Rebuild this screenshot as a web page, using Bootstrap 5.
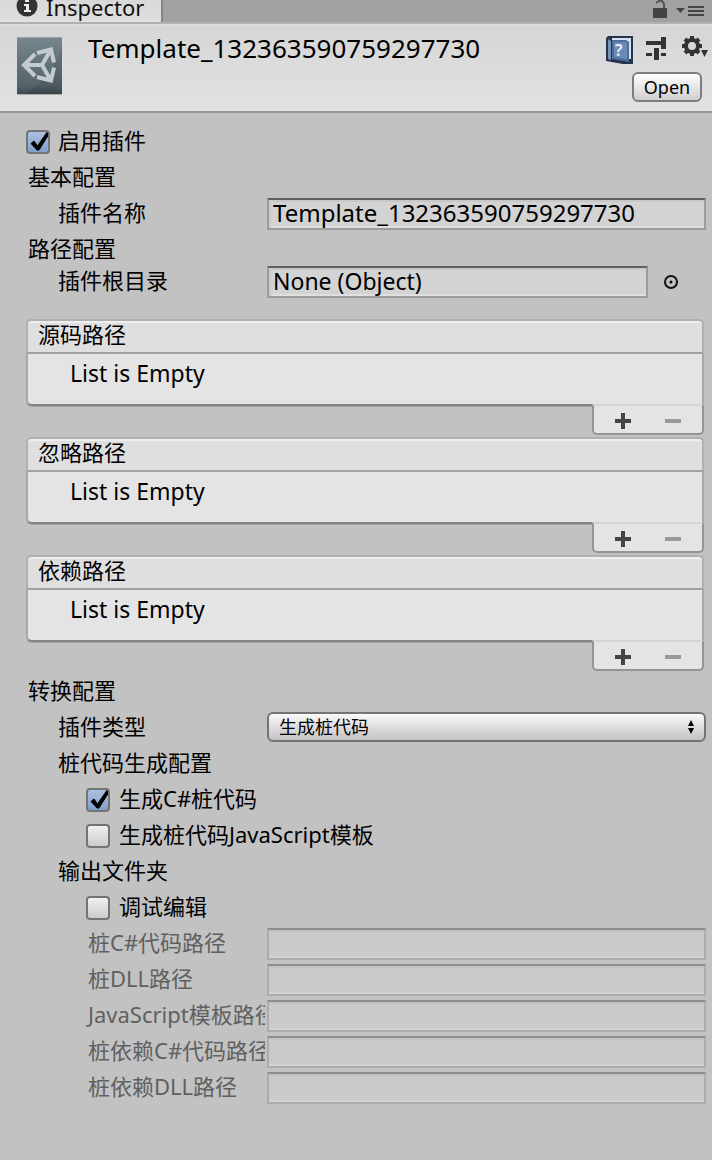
<!DOCTYPE html>
<html lang="zh-CN">
<head>
<meta charset="utf-8">
<meta name="viewport" content="width=device-width, initial-scale=1">
<title>Inspector</title>
<link href="https://cdn.jsdelivr.net/npm/bootstrap@5.3.0/dist/css/bootstrap.min.css" rel="stylesheet">
<style>
body { background: #c2c2c2; color: #000; font-family: "Noto Sans", "Noto Sans CJK SC", sans-serif; font-size: 22px; line-height: 32px; }
.tabbar { background: #a2a2a2; height: 24px; border-bottom: 2px solid #b0b0b0; }
.tab-item { background: linear-gradient(#d9d9d9, #e0e0e0); border-right: 2px solid #858585; height: 24px; padding: 0 17px 0 16px; gap: 8px; color: #111; line-height: 14px; }
.tab-item svg { margin-top: -5px; }
.asset-head { background: linear-gradient(#d6d6d6, #e2e2e2); border-top: 2px solid #dedede; border-bottom: 2px solid #959595; height: 89px; padding: 10px 2px 0 17px; }
.asset-name { font-size: 26px; line-height: 24px; margin: 0 0 0 26px; font-weight: 400; }
.asset-tools { gap: 12px; height: 28px; }
.plain { background: none; border: 0; padding: 0; line-height: 0; color: inherit; }
.open-btn { font-size: 18px; line-height: 24px; height: 30px; width: 70px; padding: 0; border: 2px solid #7d7d7d; border-radius: 6px; background: linear-gradient(#fff, #cfcfcf); color: #000; }
.panel { padding: 13px 6px 24px 0; }
.prop { min-height: 32px; margin-bottom: 4px; }
.prop-label { width: 265px; overflow: hidden; white-space: nowrap; margin-right: 2px; line-height: 28px; height: 32px; }
.lv0 { padding-left: 28px; }
.lv1 { padding-left: 58px; }
.lv2 { padding-left: 88px; }
.tick { padding-left: 26px; gap: 8px; }
.tick.inner { padding-left: 86px; gap: 9px; }
.tick label { line-height: 28px; }
.tick .form-check-input { width: 24px; height: 24px; margin: 4px 0 0; float: none; border: 2px solid #747474; border-radius: 4px; background: linear-gradient(#f4f4f4, #c8c8c8) border-box; }
.tick .form-check-input:checked { border-color: #747474; background: url("data:image/svg+xml,%3Csvg xmlns='http://www.w3.org/2000/svg' viewBox='0 0 24 24'%3E%3Cpath d='M5 13.500L8 11l3.500 5L21.500 1.500 24 2.500 13 20H11z' fill='%23000' stroke='%23000'/%3E%3C/svg%3E") center / 24px 24px no-repeat border-box, linear-gradient(#b0c4e2, #7e9cc8) border-box; }
.field { height: 32px; padding: 0 4px 3px; border: 2px solid #9c9c9c; border-top-color: #606060; border-radius: 0; background: #d3d3d3; box-shadow: inset 0 2px #c8c8c8, inset 2px 0 #cacaca, inset 0 -2px #e0e0e0; font-size: 24px; line-height: 24px; color: #000; min-width: 0; outline: 0; flex: 1 1 0; }
.field.obj { font-size: 23px; }
.field:disabled { background: #cacaca; border-color: #acacac; border-top-color: #8e8e8e; box-shadow: inset 0 2px #c2c2c2, inset 0 -2px #d2d2d2; }
.picker { width: 58px; padding-right: 12px; }
.off { color: #606060; }
.kind { height: 30px; padding: 0 30px 0 10px; font-size: 18px; line-height: 26px; border: 2px solid #747474; border-radius: 6px; color: #000; flex: 1 1 0; background: url("data:image/svg+xml,%3Csvg xmlns='http://www.w3.org/2000/svg' viewBox='0 0 6 14'%3E%3Cpath d='M0 6L3 0l3 6zM0 8h6l-3 6z'/%3E%3C/svg%3E") right 10px center / 6px 14px no-repeat, linear-gradient(#fafafa, #c4c2c4); }
.lists { padding: 17px 2px 3px 26px; }
.path-list { margin-bottom: 2px; }
.path-list h2 { font-size: 22px; font-weight: 400; line-height: 26px; height: 35px; margin: 0; padding-left: 10px; background: #dfdfdf; border: 2px solid #b0b0b0; border-bottom-color: #a2a2a2; border-radius: 5px 5px 0 0; box-shadow: inset 0 2px #efefef; }
.path-list p { font-size: 23px; line-height: 32px; height: 52px; padding: 3px 0 0 42px; margin: 0; background: #e4e4e4; border: 2px solid #a8a8a8; border-top: 0; border-bottom-color: #858585; border-radius: 0 0 0 6px; box-shadow: 0 1px #a2a2a2; }
.list-foot { width: 112px; height: 31px; margin: -2px 0 0 auto; border: 2px solid #949494; border-top-color: #d3d3d3; border-radius: 0 0 5px 5px; background: #e4e4e4; padding: 2px 21px 0; position: relative; }
</style>
</head>
<body>
<nav class="tabbar d-flex justify-content-between overflow-hidden">
  <div class="tab-item d-flex">
    <svg width="22" height="22" viewBox="0 0 22 22"><circle cx="11" cy="11" r="10.500" fill="#333"/><path d="M9 4h4v3H9zM8 9h5v6h2v2H8v-2h2v-4H8z" fill="#eee"/></svg>
    <span>Inspector</span>
  </div>
  <div class="d-flex pe-2">
    <button class="plain me-2" type="button" aria-label="Lock"><svg width="16" height="24" viewBox="0 0 16 24"><path d="M1 8h14v10H1z" fill="#444"/><path d="M4 3L7 1h3l2 3v4" fill="none" stroke="#555" stroke-width="2"/></svg></button>
    <button class="plain" type="button" aria-label="Menu"><svg width="28" height="24" viewBox="0 0 28 24"><path d="M0 8h9l-4.500 5zM12 6h16v2H12zM12 10h16v2H12zM12 14h16v2H12z" fill="#444"/></svg></button>
  </div>
</nav>
<header class="asset-head d-flex align-items-start">
  <svg width="45" height="60" viewBox="0 0 45 60">
    <defs><linearGradient id="slate" x2="0" y2="1"><stop offset="0" stop-color="#75868d"/><stop offset=".85" stop-color="#56636a"/><stop offset="1" stop-color="#3e4a51"/></linearGradient></defs>
    <path d="M0 2h45v57H0z" fill="#aaa"/><path d="M0 1h45v57H0z" fill="url(#slate)"/><path d="M0 1h45v1H0z" fill="#9aa8ae"/>
    <path d="M45 10v48H8Q35 42 45 10z" fill="#000" opacity=".08"/>
    <path d="M18 18L7 29l11 11M8 29h17l8-14M25 29l8 14M20 17l14-3.500 3 13M20 41l14 3.500 3-13" fill="none" stroke="#c3cbd0" stroke-width="4"/>
  </svg>
  <h1 class="asset-name flex-grow-1">Template_132363590759297730</h1>
  <div class="d-flex flex-column align-items-end">
    <div class="asset-tools d-flex">
      <button class="plain" type="button" aria-label="Help"><svg width="28" height="28" viewBox="0 0 28 28"><path d="M2 0h25v28H17L0 25V2z" fill="#25344f"/><path d="M6 2h19v21H6z" fill="#d5e0ec"/><path d="M2 3l3 2v19l-3-1z" fill="#7894b5"/><path d="M6 4h14l3 2v20L6 23z" fill="#4c6f9c"/><path d="M8 6h13v17L8 21z" fill="#6a8bb5"/><text x="9" y="20" font-family="Noto Sans" font-size="16" font-weight="600" fill="#f0f5fa">?</text></svg></button>
      <button class="plain" type="button" aria-label="Presets"><svg width="22" height="28" viewBox="0 0 22 28"><path d="M0 5h15v4H0zM15 1h5v12h-5zM0 17h6v3H0zM8 12h5v12H8zM15 17h5v3h-5z" fill="#333"/></svg></button>
      <button class="plain" type="button" aria-label="Settings"><svg width="30" height="28" viewBox="0 0 30 28"><g transform="translate(12 10)" stroke="#333" fill="none"><circle r="6" stroke-width="4"/><path d="M0-10v4M0 6v4M-10 0h4M6 0h4M-7-7l3 3M4 4l3 3M-7 7l3-3M4-4l3-3" stroke-width="4"/></g><path d="M21 14h7l-3.500 7z" fill="#333"/></svg></button>
    </div>
    <button class="open-btn me-2 mt-2" type="button">Open</button>
  </div>
</header>
<main class="panel">
  <div class="prop tick d-flex"><input class="form-check-input" type="checkbox" id="enable" checked><label for="enable">启用插件</label></div>
  <div class="prop"><div class="lv0 prop-label">基本配置</div></div>
  <div class="prop d-flex"><label class="prop-label lv1" for="name">插件名称</label><input class="field" id="name" type="text" value="Template_132363590759297730"></div>
  <div class="prop mb-0"><div class="lv0 prop-label">路径配置</div></div>
  <div class="prop d-flex"><label class="prop-label lv1" for="root">插件根目录</label><input class="field obj" id="root" type="text" value="None (Object)" readonly>
    <button class="plain picker" type="button" aria-label="Select object"><svg width="16" height="16" viewBox="0 0 16 16"><circle cx="8" cy="8" r="6" fill="none" stroke="#111" stroke-width="2"/><circle cx="8" cy="8" r="1.500"/></svg></button></div>

  <div class="lists">
    <section class="path-list"><h2>源码路径</h2><p>List is Empty</p>
      <div class="list-foot d-flex justify-content-between align-items-center"><button class="plain" type="button" aria-label="Add"><svg width="16" height="16" viewBox="0 0 16 16"><path d="M6 0h4v6h6v4h-6v6H6v-6H0V6h6z" fill="#444"/></svg></button><button class="plain" type="button" aria-label="Remove"><svg width="16" height="16" viewBox="0 0 16 16"><path d="M0 6h16v4H0z" fill="#999"/></svg></button></div>
    </section>
    <section class="path-list"><h2>忽略路径</h2><p>List is Empty</p>
      <div class="list-foot d-flex justify-content-between align-items-center"><button class="plain" type="button" aria-label="Add"><svg width="16" height="16" viewBox="0 0 16 16"><path d="M6 0h4v6h6v4h-6v6H6v-6H0V6h6z" fill="#444"/></svg></button><button class="plain" type="button" aria-label="Remove"><svg width="16" height="16" viewBox="0 0 16 16"><path d="M0 6h16v4H0z" fill="#999"/></svg></button></div>
    </section>
    <section class="path-list"><h2>依赖路径</h2><p>List is Empty</p>
      <div class="list-foot d-flex justify-content-between align-items-center"><button class="plain" type="button" aria-label="Add"><svg width="16" height="16" viewBox="0 0 16 16"><path d="M6 0h4v6h6v4h-6v6H6v-6H0V6h6z" fill="#444"/></svg></button><button class="plain" type="button" aria-label="Remove"><svg width="16" height="16" viewBox="0 0 16 16"><path d="M0 6h16v4H0z" fill="#999"/></svg></button></div>
    </section>
  </div>

  <div class="prop"><div class="lv0 prop-label">转换配置</div></div>
  <div class="prop d-flex"><label class="prop-label lv1" for="kind">插件类型</label><select class="kind form-select" id="kind"><option>生成桩代码</option></select></div>
  <div class="prop"><div class="lv1 prop-label">桩代码生成配置</div></div>
  <div class="prop tick inner d-flex"><input class="form-check-input" type="checkbox" id="cs" checked><label for="cs">生成C#桩代码</label></div>
  <div class="prop tick inner d-flex"><input class="form-check-input" type="checkbox" id="js"><label for="js">生成桩代码JavaScript模板</label></div>
  <div class="prop"><div class="lv1 prop-label">输出文件夹</div></div>
  <div class="prop tick inner d-flex"><input class="form-check-input" type="checkbox" id="debug"><label for="debug">调试编辑</label></div>
  <div class="prop d-flex off"><label class="prop-label lv2" for="p1">桩C#代码路径</label><input class="field" id="p1" type="text" disabled></div>
  <div class="prop d-flex off"><label class="prop-label lv2" for="p2">桩DLL路径</label><input class="field" id="p2" type="text" disabled></div>
  <div class="prop d-flex off"><label class="prop-label lv2" for="p3">JavaScript模板路径</label><input class="field" id="p3" type="text" disabled></div>
  <div class="prop d-flex off"><label class="prop-label lv2" for="p4">桩依赖C#代码路径</label><input class="field" id="p4" type="text" disabled></div>
  <div class="prop d-flex off"><label class="prop-label lv2" for="p5">桩依赖DLL路径</label><input class="field" id="p5" type="text" disabled></div>
</main>
<script src="https://cdn.jsdelivr.net/npm/bootstrap@5.3.0/dist/js/bootstrap.bundle.min.js"></script>
</body>
</html>
